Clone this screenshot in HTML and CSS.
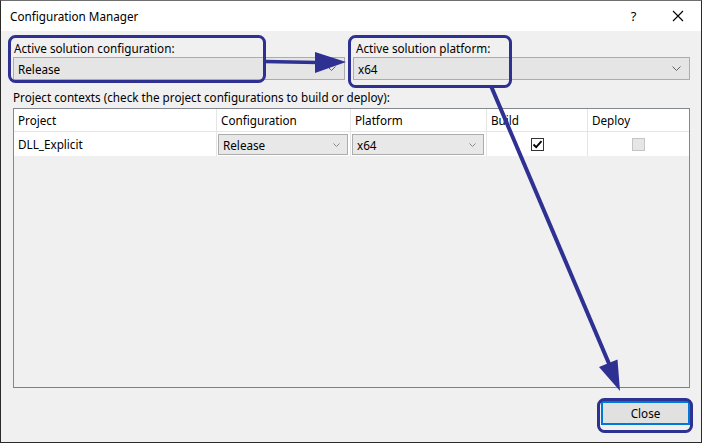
FILE: index.html
```html
<!DOCTYPE html>
<html>
<head>
<meta charset="utf-8">
<link rel="stylesheet" href="styles.css">
</head>
<body>
<div class="window">
  <div class="titlebar">
    <span class="title">Configuration Manager</span>
    <span class="tb-help">?</span>
    <span class="tb-close">
      <svg width="12" height="12" viewBox="0 0 12 12"><path d="M1 1 L11 11 M11 1 L1 11" stroke="#000" stroke-width="1.1" fill="none"/></svg>
    </span>
  </div>
  <div class="body">
    <div class="top-row">
      <div class="group group-config">
        <div class="label">Active solution configuration:</div>
        <div class="combo">
          <span class="combo-text">Release</span>
          <svg class="chev" width="9" height="5" viewBox="0 0 9 5"><path d="M0.5 0.5 L4.5 4.5 L8.5 0.5" stroke="#606060" fill="none"/></svg>
        </div>
      </div>
      <div class="group group-platform">
        <div class="label">Active solution platform:</div>
        <div class="combo">
          <span class="combo-text">x64</span>
          <svg class="chev" width="9" height="5" viewBox="0 0 9 5"><path d="M0.5 0.5 L4.5 4.5 L8.5 0.5" stroke="#606060" fill="none"/></svg>
        </div>
      </div>
    </div>
    <div class="contexts">Project contexts (check the project configurations to build or deploy):</div>
    <div class="grid">
      <div class="row header">
        <div class="cell c1">Project</div>
        <div class="cell c2">Configuration</div>
        <div class="cell c3">Platform</div>
        <div class="cell c4">Build</div>
        <div class="cell c5">Deploy</div>
      </div>
      <div class="row data">
        <div class="cell c1">DLL_Explicit</div>
        <div class="cell c2 combo-cell">
          <div class="combo small">
            <span class="combo-text">Release</span>
            <svg class="chev" width="7" height="4" viewBox="0 0 7 4"><path d="M0.5 0.5 L3.5 3.5 L6.5 0.5" stroke="#8a8a8a" fill="none"/></svg>
          </div>
        </div>
        <div class="cell c3 combo-cell">
          <div class="combo small">
            <span class="combo-text">x64</span>
            <svg class="chev" width="7" height="4" viewBox="0 0 7 4"><path d="M0.5 0.5 L3.5 3.5 L6.5 0.5" stroke="#8a8a8a" fill="none"/></svg>
          </div>
        </div>
        <div class="cell c4 check-cell">
          <span class="check on">
            <svg width="11" height="11" viewBox="0 0 11 11"><path d="M1.5 5.5 L4.2 8.2 L9.5 2.2" stroke="#000" stroke-width="1.8" fill="none"/></svg>
          </span>
        </div>
        <div class="cell c5 check-cell">
          <span class="check off"></span>
        </div>
      </div>
    </div>
    <div class="footer">
      <button class="close-btn">Close</button>
    </div>
  </div>
  <svg class="annot" width="702" height="443" viewBox="0 0 702 443">
    <g fill="none" stroke="#2e3092" stroke-width="3">
      <rect x="9.5" y="36.5" width="255" height="45" rx="6"/>
      <rect x="349.5" y="36.5" width="161" height="50" rx="6"/>
      <rect x="598.5" y="399.5" width="93" height="32" rx="6"/>
      <line x1="264" y1="61.5" x2="318" y2="62.5" stroke-width="3.5"/>
      <line x1="491" y1="86" x2="610" y2="366" stroke-width="4"/>
    </g>
    <g fill="#2e3092">
      <polygon points="315,52 346,62 315,73"/>
      <polygon points="599,367 620,391 617.5,359.5"/>
    </g>
  </svg>
</div>
</body>
</html>
```

FILE: styles.css
```css
* { box-sizing: border-box; }
html, body { margin: 0; padding: 0; }
body {
  width: 702px;
  height: 443px;
  overflow: hidden;
  font-family: "Noto Sans", "Open Sans", sans-serif;
  font-size: 11.7px;
  color: #000;
  background: #f0f0f0;
}
.window {
  position: relative;
  width: 702px;
  height: 443px;
  border: 1px solid #2a2a2a;
  border-top-color: #6f6f6f;
  background: #f0f0f0;
  display: flex;
  flex-direction: column;
}
.titlebar {
  height: 30px;
  background: #fff;
  display: flex;
  align-items: center;
  padding-left: 9px;
  flex: none;
}
.title {
  flex: 1;
  font-size: 11.7px;
}
.tb-help {
  width: 46px;
  text-align: center;
  font-size: 13px;
  margin-right: 0;
  padding-left: 3px;
}
.tb-close {
  width: 46px;
  height: 30px;
  display: flex;
  align-items: center;
  justify-content: center;
}
.body {
  flex: 1;
  display: flex;
  flex-direction: column;
  padding: 0 11px 0 12px;
}
.top-row {
  display: flex;
  gap: 8px;
  padding-top: 9px;
}
.group-config { width: 332px; }
.group-platform { flex: 1; }
.label {
  height: 17px;
  line-height: 16px;
  padding-left: 1px;
}
.group-platform .label { padding-left: 3px; }
.combo {
  height: 23px;
  border: 1px solid #acacac;
  background: #e5e5e5;
  display: flex;
  align-items: center;
  padding: 0 8px 0 4px;
}
.combo-text { flex: 1; }
.contexts {
  height: 20px;
  margin-top: 8px;
  line-height: 18px;
}
.grid {
  height: 280px;
  background: #f0f0f0;
  border: 1px solid #828790;
  border-bottom-color: #7a7f88;
  display: flex;
  flex-direction: column;
}
.row {
  display: flex;
  background: #fff;
}
.header { height: 23px; border-bottom: 1px solid #e5e5e5; }
.data { height: 24px; }
.cell {
  display: flex;
  align-items: center;
  padding-left: 5px;
  border-right: 1px solid #e5e5e5;
}
.header .cell { padding-left: 4px; }
.c1 { width: 203px; }
.c2 { width: 134px; }
.c3 { width: 136px; }
.c4 { width: 101px; }
.c5 { flex: 1; border-right: none; }
.data .c1 { padding-left: 4px; }
.combo-cell { padding: 2px 2px 1px 1px; }
.combo.small {
  width: 100%;
  height: 21px;
  padding: 0 7px 0 4px;
  background: #e8e8e8;
}
.check-cell { justify-content: center; padding-left: 0; }
.check {
  width: 13px;
  height: 13px;
  display: flex;
  align-items: center;
  justify-content: center;
}
.check.on { border: 1px solid #333; background: #fff; }
.check.off { border: 1px solid #c4c4c4; background: #e6e6e6; }
.footer {
  display: flex;
  justify-content: flex-end;
  padding-top: 13px;
}
.close-btn {
  width: 89px;
  height: 24px;
  font-family: inherit;
  font-size: 11.7px;
  background: #e1e1e1;
  border: 2px solid #0078d7;
  padding: 0;
  color: #000;
}
.annot {
  position: absolute;
  left: -1px;
  top: -1px;
  pointer-events: none;
}
```
